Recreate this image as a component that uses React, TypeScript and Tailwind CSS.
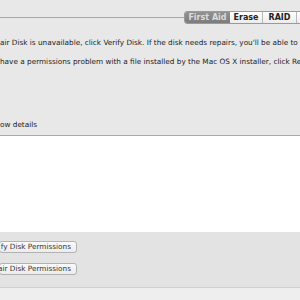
import React from "react";

export default function App() {
  const font = { fontFamily: '"Lucida Grande", "DejaVu Sans", "Liberation Sans", sans-serif' };
  return (
    <div className="w-[300px] h-[300px] overflow-hidden bg-[#e8e8e8] flex flex-col" style={font}>
      {/* tab bar */}
      <div className="h-[30px] flex items-start pt-[11px] w-[320px] shrink-0">
        <div className="h-px bg-[#a8a8a8] w-[184px] mt-[6px] shrink-0" />
        <div className="flex h-[13px] rounded-[3px] border border-[#9a9a9a] overflow-hidden text-[8px] font-bold leading-none shrink-0">
          <div className="w-[45px] flex items-center justify-center bg-gradient-to-b from-[#929292] to-[#7c7c7c] text-[#dcdcdc]">First Aid</div>
          <div className="w-[33px] flex items-center justify-center bg-gradient-to-b from-[#ffffff] to-[#ececec] text-[#222] border-r border-[#b8b8b8]">Erase</div>
          <div className="w-[34px] flex items-center justify-center bg-gradient-to-b from-[#ffffff] to-[#ececec] text-[#222] border-r border-[#b8b8b8]">RAID</div>
          <div className="w-[20px] bg-gradient-to-b from-[#ffffff] to-[#ececec]" />
        </div>
      </div>
      {/* text */}
      <div className="h-[105px] shrink-0 flex flex-col pt-[8px] text-[7.3px] text-[#222] whitespace-nowrap">
        <div className="h-[10px] leading-[10px]">air Disk is unavailable, click Verify Disk. If the disk needs repairs, you'll be able to</div>
        <div className="mt-[9px] h-[10px] leading-[10px]">have a permissions problem with a file installed by the Mac OS X installer, click Re</div>
        <div className="mt-[53px] h-[10px] leading-[10px] text-[#1a1a1a]">ow details</div>
      </div>
      <div className="border-t border-[#a9a9a9] bg-white h-[97px] shrink-0" />
      <div className="bg-[#e3e3e3] h-[55px] shrink-0 flex flex-col gap-[10px] pt-[9px]">
        <div className="w-[78px] h-[12px] ml-[-1px] rounded-[3px] border border-[#b2b2b2] bg-gradient-to-b from-[#fafafa] to-[#ececec] text-[7.3px] text-[#333] flex items-center justify-end pr-[5px] whitespace-nowrap leading-none">fy Disk Permissions</div>
        <div className="w-[78px] h-[12px] ml-[-1px] rounded-[3px] border border-[#b2b2b2] bg-gradient-to-b from-[#fafafa] to-[#ececec] text-[7.3px] text-[#333] flex items-center justify-end pr-[5px] whitespace-nowrap leading-none">air Disk Permissions</div>
      </div>
      <div className="border-t border-[#d0d0d0] bg-[#eeeeee] flex-1" />
    </div>
  );
}
